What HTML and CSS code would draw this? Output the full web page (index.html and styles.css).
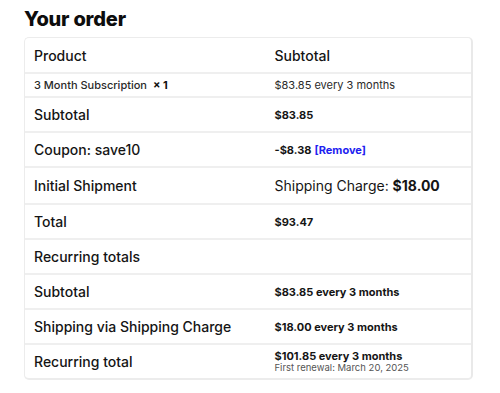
FILE: index.html
```html
<!DOCTYPE html>
<html>
<head>
<meta charset="utf-8">
<link rel="stylesheet" href="styles.css">
</head>
<body>
<div class="page">
  <h2 class="title">Your order</h2>
  <div class="box">
    <table class="order">
      <tr class="head">
        <th class="lbl">Product</th>
        <th class="val">Subtotal</th>
      </tr>
      <tr class="item">
        <td class="lbl">3 Month Subscription <strong class="qty">× 1</strong></td>
        <td class="val">$83.85 every 3 months</td>
      </tr>
      <tr>
        <th class="lbl">Subtotal</th>
        <td class="val"><strong>$83.85</strong></td>
      </tr>
      <tr>
        <th class="lbl">Coupon: save10</th>
        <td class="val"><strong>-$8.38</strong> <a class="remove" href="#">[Remove]</a></td>
      </tr>
      <tr class="ship">
        <th class="lbl">Initial Shipment</th>
        <td class="val">Shipping Charge: <strong>$18.00</strong></td>
      </tr>
      <tr>
        <th class="lbl">Total</th>
        <td class="val"><strong>$93.47</strong></td>
      </tr>
      <tr>
        <th class="lbl">Recurring totals</th>
        <td class="val"></td>
      </tr>
      <tr>
        <th class="lbl">Subtotal</th>
        <td class="val"><strong>$83.85 every 3 months</strong></td>
      </tr>
      <tr>
        <th class="lbl">Shipping via Shipping Charge</th>
        <td class="val"><strong>$18.00 every 3 months</strong></td>
      </tr>
      <tr class="last">
        <th class="lbl">Recurring total</th>
        <td class="val"><strong class="rt">$101.85 every 3 months</strong><div class="renew">First renewal: March 20, 2025</div></td>
      </tr>
    </table>
  </div>
</div>
</body>
</html>
```
FILE: styles.css
```css
* { box-sizing: border-box; }
html, body { margin: 0; padding: 0; background: #fff; }
body { font-family: Inter, "Noto Sans", sans-serif; color: #151515; }
.page { padding: 8px 27px 0 24px; }
.title {
  margin: 0 0 6px 0;
  font-size: 20px;
  line-height: 23px;
  font-weight: 800;
  letter-spacing: -0.2px;
  color: #0d0d0d;
}
.box {
  border: 1px solid #ececec;
  border-right: 2px solid #e9e9e9;
  border-bottom: 2px solid #ececec;
  border-radius: 5px;
  overflow: hidden;
}
.order { width: 100%; border-collapse: collapse; }
.order th, .order td {
  text-align: left;
  vertical-align: middle;
  border-bottom: 2px solid #efefef;
  padding: 7px 9px;
  height: 35px;
}
.order tr.last th, .order tr.last td { border-bottom: none; height: 34px; }
.lbl { width: 240px; font-size: 14px; font-weight: 500; }
.val { font-size: 11px; font-weight: 400; border-left: 1px solid #fff; }
.order tr.head th { height: 35px; font-size: 14px; font-weight: 500; }
.order tr.item td { height: 24px; padding: 3px 9px; font-size: 11px; color: #2a2a2a; }
.qty { font-weight: 700; color: #111; margin-left: 3px; }
.val strong { font-weight: 700; }
.order tr.ship th, .order tr.ship td { height: 37px; }
.order tr.ship td { font-size: 14px; font-weight: 400; }
.remove { color: #2121f0; font-weight: 700; text-decoration: none; }
.order tr.last td { padding-top: 3px; padding-bottom: 3px; }
.rt { display: block; line-height: 12px; }
.renew { font-size: 9.5px; line-height: 11px; color: #555; }
```
